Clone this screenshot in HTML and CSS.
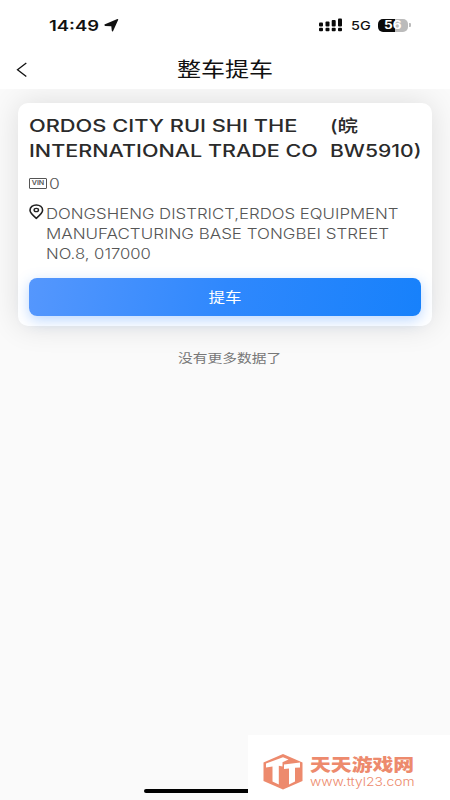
FILE: index.html
```
<!DOCTYPE html>
<html lang="zh-CN">
<head>
<meta charset="utf-8">
<title>整车提车</title>
<link rel="stylesheet" href="styles.css">
</head>
<body>
<div class="screen">
  <header class="top">
    <div class="status">
      <span class="clock"><span class="wide t-clock">14:49</span></span>
      <svg class="nav-arrow" width="15" height="13" viewBox="0 0 15 13"><path d="M14.200.8 9 12.200Q8.200 13 7.800 11.800L7.300 7.200 1.200 6.900Q-.3 6.100 1 5.300L12.800.2Q14.600-.3 14.200.8Z" fill="#111"/></svg>
      <svg class="signal" width="24" height="14" viewBox="0 0 24 14"><g fill="#0a0a0a"><rect x="0" y="4.500" width="4" height="4" rx="1"/><rect x="6.500" y="3.500" width="4" height="5" rx="1"/><rect x="12.700" y="2" width="4" height="6.500" rx="1"/><rect x="19" y="0.500" width="4" height="8" rx="1"/><rect x="0" y="9.700" width="4" height="3.500" rx="1"/><rect x="6.500" y="9.700" width="4" height="3.500" rx="1"/><rect x="12.700" y="9.700" width="4" height="3.500" rx="1"/><rect x="19" y="9.700" width="4" height="3.500" rx="1"/></g></svg>
      <span class="network"><span class="wide t-net">5G</span></span>
      <span class="battery"><span class="wide t-bat">56</span></span>
      <span class="battery-tip"></span>
    </div>
    <nav class="navbar">
      <svg class="back" width="12" height="16" viewBox="0 0 12 16"><path d="M10.300 1 1.500 7.700 10.300 14.600" fill="none" stroke="#111" stroke-width="1.300"/></svg>
      <h1 class="title"><span class="wide t-title">整车提车</span></h1>
    </nav>
  </header>
  <main class="content">
    <section class="card">
      <div class="heading">
        <div class="company">
          <div class="line"><span class="wide t-c1">ORDOS CITY RUI SHI THE</span></div>
          <div class="line"><span class="wide t-c2">INTERNATIONAL TRADE CO</span></div>
        </div>
        <div class="plate">
          <div class="line"><span class="wide t-p1">(皖</span></div>
          <div class="line"><span class="wide t-p2">BW5910)</span></div>
        </div>
      </div>
      <div class="vin">
        <span class="vin-badge"><span class="wide t-vin">VIN</span></span>
        <span class="wide t-zero">0</span>
      </div>
      <div class="address">
        <svg class="pin" width="15" height="16" viewBox="0 0 15 16"><path d="M7.300 14.300C4 11.600 1 9 1 6.300 1 3.200 3.800 1 7.300 1s6.300 2.200 6.300 5.300c0 2.700-3 5.300-6.300 8Z" fill="none" stroke="#222" stroke-width="1.600"/><ellipse cx="7.300" cy="6" rx="2.200" ry="1.600" fill="none" stroke="#222" stroke-width="1.400"/></svg>
        <div class="lines">
          <div class="row"><span class="wide t-a1">DONGSHENG DISTRICT,ERDOS EQUIPMENT</span></div>
          <div class="row"><span class="wide t-a2">MANUFACTURING BASE TONGBEI STREET</span></div>
          <div class="row"><span class="wide t-a3">NO.8, 017000</span></div>
        </div>
      </div>
      <button class="pickup"><span class="wide t-btn">提车</span></button>
    </section>
    <p class="end"><span class="wide t-end">没有更多数据了</span></p>
  </main>
  <div class="home-bar"></div>
  <aside class="brand">
    <svg class="cube" width="40" height="36" viewBox="0 0 40 36">
      <path d="M20 0 39.500 8.500V27L20 35.500.5 27V8.500Z" fill="#ed8a6d"/>
      <path d="M3 9.500 20 3.200 25.500 5.500 19.500 8.200V12.500L15.800 11.800V30.500L9.500 27.500V12.500L3 13.500Z" fill="#fff"/>
      <path d="M21 10.500 37 8.500V13.500L32 13.700V27.500L26 30.500V14.500L21 15Z" fill="#fff"/>
    </svg>
    <div class="brand-text">
      <div class="brand-name"><span class="wide t-bn">天天游戏网</span></div>
      <div class="brand-url"><span class="wide t-bu">www.ttyl23.com</span></div>
    </div>
  </aside>
</div>
</body>
</html>
```
FILE: styles.css
```
* { box-sizing: border-box; }

body {
  margin: 0;
  font-family: Inter, "Noto Sans CJK SC", sans-serif;
  color: #2b2b2b;
}

.screen {
  position: relative;
  width: 450px;
  height: 800px;
  overflow: hidden;
  background: #fafafa;
}

/* Expanded lettering: each label is stretched horizontally */
.wide { display: inline-block; white-space: nowrap; transform-origin: 0 50%; }
.t-clock { transform: scaleX(1.23); }
.t-net { transform: scaleX(1.2); }
.t-bat { transform: scaleX(1.18); }
.t-title { transform: scaleX(1.2); }
.t-c1 { transform: scaleX(1.283); }
.t-c2 { transform: scaleX(1.268); }
.t-p1 { transform: scaleX(1.2); }
.t-p2 { transform: scaleX(1.24); }
.t-vin { transform: scaleX(1.1); transform-origin: 50% 50%; }
.t-zero { transform: scaleX(1.25); }
.t-a1 { transform: scaleX(1.2); }
.t-a2 { transform: scaleX(1.213); }
.t-a3 { transform: scaleX(1.19); }
.t-btn, .t-end { transform: scaleX(1.18); transform-origin: 50% 50%; }
.t-bn { transform: scaleX(1.19); }
.t-bu { transform: scaleX(1.155); }

.top { position: relative; z-index: 1; height: 89px; background: #fff; }

.status { display: flex; height: 50px; padding-left: 49px; align-items: center; }
.clock { width: 55px; font-size: 15px; font-weight: 600; color: #111; }
.signal { margin-left: 200px; }
.network { width: 27px; margin-left: 8px; font-size: 12px; font-weight: 500; color: #111; }
.battery {
  width: 30px;
  height: 13px;
  padding-left: 6px;
  border-radius: 5px;
  background: linear-gradient(90deg, #0a0a0a 56%, #bbb 56%);
  color: #fff;
  font-size: 11.5px;
  font-weight: 700;
  line-height: 13px;
}
.battery .wide { display: block; width: 16px; }
.battery-tip { width: 1.5px; height: 4px; margin-left: 1px; border-radius: 0 1px 1px 0; background: #bbb; }

.navbar { display: flex; height: 39px; align-items: center; padding-left: 16px; }
.title { margin: -2px 0 0 149px; font-size: 20px; font-weight: 400; color: #111; }

.content { height: 711px; padding: 14px 18px 0; }

.card {
  height: 223px;
  padding: 11px 11px 10px;
  border-radius: 10px;
  background: #fff;
  box-shadow: 0 0 30px rgba(0, 0, 0, 0.12);
}

.heading { display: flex; }
.company { width: 302px; }
.plate { margin-left: -1px; }
.line { height: 25px; line-height: 25px; font-size: 17px; font-weight: 550; }

.vin { display: flex; align-items: center; height: 16px; margin-top: 11px; font-size: 14px; font-weight: 300; color: #555; }
.vin-badge {
  width: 18px;
  height: 11px;
  margin-right: 2px;
  border: 1px solid #555;
  border-radius: 1px;
  font-size: 6.5px;
  font-weight: 600;
  line-height: 9px;
  text-align: center;
}
.vin-badge .wide { display: block; }

.address { display: flex; margin-top: 13px; color: #555; }
.pin { width: 15px; height: 16px; margin-right: 2px; }
.row { height: 20px; line-height: 20px; font-size: 14px; font-weight: 300; }

.pickup {
  display: block;
  width: 392px;
  height: 38px;
  margin-top: 14px;
  padding: 0 0 2px;
  border: 0;
  border-radius: 8px;
  background: linear-gradient(100deg, #5597fd, #2f88fd 50%, #1781fb);
  box-shadow: 0 4px 14px rgba(60, 140, 255, 0.35);
  color: #fff;
  font: inherit;
  font-size: 14px;
}

.end { margin: 23px 0 0 9px; font-size: 12.5px; line-height: 20px; text-align: center; color: #777; }

.home-bar { position: absolute; left: 144px; top: 789px; width: 162px; height: 4px; border-radius: 2px; background: #000; }

.brand {
  position: absolute;
  left: 248px;
  top: 735px;
  display: flex;
  width: 202px;
  height: 65px;
  padding: 19px 15px;
  background: #fff;
  color: #ed8a6d;
}
.cube { flex: none; margin-right: 7px; }
.brand-name { height: 21px; font-size: 17.5px; font-weight: 900; line-height: 21px; }
.brand-url { height: 14px; font-size: 12px; line-height: 14px; font-weight: 300; }
```
